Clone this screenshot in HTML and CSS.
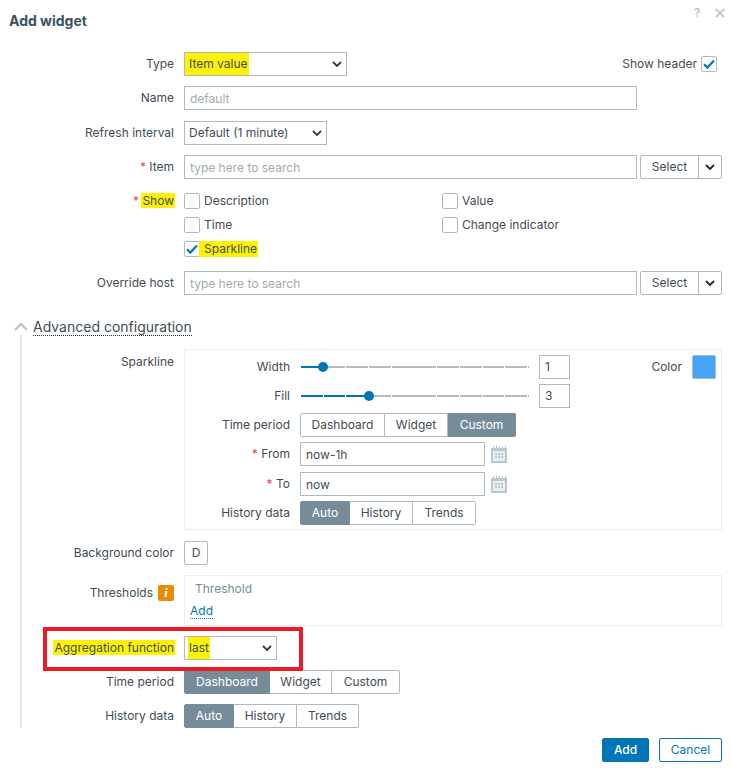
FILE: index.html
```html
<!DOCTYPE html>
<html lang="en">
<head>
<meta charset="utf-8">
<title>Add widget</title>
<link rel="stylesheet" href="styles.css">
</head>
<body>
<svg class="defs" width="0" height="0" aria-hidden="true">
  <symbol id="chev" viewBox="0 0 10 6"><path d="M1 1l4 4 4-4" fill="none" stroke="currentColor" stroke-width="1.9"/></symbol>
  <symbol id="tick" viewBox="0 0 12 10"><path d="M1 5.2l3.4 3.4L11 1.6" fill="none" stroke="#0275b8" stroke-width="2.2"/></symbol>
  <symbol id="cal" viewBox="0 0 18 18">
    <path d="M1 3h16v15H1z" fill="#b9c7ce"/>
    <path d="M3 6h12v10H3z" fill="#e9eef0"/>
    <path d="M3 1h1v2H3zM6 1h1v2H6zM9 1h1v2H9zM12 1h1v2h-1zM15 1h1v2h-1z" fill="#b9c7ce"/>
    <path d="M5 8h2v2H5zM8 8h2v2H8zM11 8h2v2h-2zM5 11h2v2H5zM8 11h2v2H8zM11 11h2v2h-2z" fill="#b9c7ce"/>
  </symbol>
</svg>
<div class="dialog">
  <header class="head">
    <h1 class="title">Add widget</h1>
    <span class="help">?</span>
    <svg class="close" width="10" height="10" viewBox="0 0 10 10"><path d="M.8.8l8.4 8.4M9.2.8L.8 9.2" stroke="#bcc8ce" stroke-width="1.8" fill="none"/></svg>
  </header>

  <div class="form">
    <div class="label">Type</div>
    <div class="field between">
      <div class="select w163"><span class="hl wide">Item value</span><svg class="chev"><use href="#chev"/></svg></div>
      <label class="showhdr">Show header <span class="check on"><svg width="12" height="10"><use href="#tick"/></svg></span></label>
    </div>

    <div class="label">Name</div>
    <div class="field"><div class="input w453 ph">default</div></div>

    <div class="label">Refresh interval</div>
    <div class="field"><div class="select w143"><span>Default (1 minute)</span><svg class="chev"><use href="#chev"/></svg></div></div>

    <div class="label"><span class="req">*</span> Item</div>
    <div class="field picker">
      <div class="input w453 ph">type here to search</div>
      <div class="split"><span class="split-main">Select</span><span class="split-arrow"><svg class="chev dark"><use href="#chev"/></svg></span></div>
    </div>

    <div class="label show-label"><span class="req">*</span> <span class="hl">Show</span></div>
    <div class="checks">
      <label class="opt"><span class="check"></span>Description</label>
      <label class="opt"><span class="check"></span>Value</label>
      <label class="opt"><span class="check"></span>Time</label>
      <label class="opt"><span class="check"></span>Change indicator</label>
      <label class="opt"><span class="check on"><svg width="12" height="10"><use href="#tick"/></svg></span><span class="hl wide">Sparkline</span></label>
    </div>

    <div class="label">Override host</div>
    <div class="field picker">
      <div class="input w453 ph">type here to search</div>
      <div class="split"><span class="split-main">Select</span><span class="split-arrow"><svg class="chev dark"><use href="#chev"/></svg></span></div>
    </div>
  </div>

  <div class="adv-head">
    <svg class="adv-chev" width="14" height="9" viewBox="0 0 14 9"><path d="M1 8l6-6 6 6" fill="none" stroke="#b6c4cb" stroke-width="2.4"/></svg>
    <span class="adv-title">Advanced configuration</span>
  </div>

  <div class="adv-body">
    <div class="form adv-form">
      <div class="label spark-label">Sparkline</div>
      <div class="panel spark">
        <div class="label">Width</div>
        <div class="field slider-row">
          <div class="slider"><div class="fill" style="width:22px"><i class="thumb"></i></div></div>
          <div class="input num">1</div>
          <div class="colorpick"><span>Color</span><span class="swatch"></span></div>
        </div>
        <div class="label">Fill</div>
        <div class="field slider-row">
          <div class="slider"><div class="fill" style="width:68px"><i class="thumb"></i></div></div>
          <div class="input num">3</div>
        </div>
        <div class="label">Time period</div>
        <div class="field"><div class="seg"><span class="s85">Dashboard</span><span class="s63">Widget</span><span class="s68 active">Custom</span></div></div>
        <div class="label"><span class="req">*</span> From</div>
        <div class="field date"><div class="input w185">now-1h</div><svg width="18" height="18"><use href="#cal"/></svg></div>
        <div class="label to-label"><span class="req">*</span> To</div>
        <div class="field date to-label"><div class="input w185">now</div><svg width="18" height="18"><use href="#cal"/></svg></div>
        <div class="label">History data</div>
        <div class="field"><div class="seg"><span class="s50 active">Auto</span><span class="s63">History</span><span class="s63">Trends</span></div></div>
      </div>

      <div class="label">Background color</div>
      <div class="field"><div class="dbox">D</div></div>

      <div class="label thr-label">Thresholds <span class="info">i</span></div>
      <div class="panel thresholds">
        <div class="thr-head">Threshold</div>
        <a class="add-link">Add</a>
      </div>

      <div class="label agg"><span class="hl">Aggregation function</span></div>
      <div class="field agg-field">
        <div class="select w93"><span class="hl">last</span><svg class="chev"><use href="#chev"/></svg></div>
        <div class="redbox"></div>
      </div>

      <div class="label">Time period</div>
      <div class="field"><div class="seg"><span class="s86 active">Dashboard</span><span class="s62">Widget</span><span class="s68">Custom</span></div></div>

      <div class="label">History data</div>
      <div class="field"><div class="seg"><span class="s50 active">Auto</span><span class="s63">History</span><span class="s62">Trends</span></div></div>
    </div>
  </div>

  <footer class="foot">
    <button class="btn primary">Add</button>
    <button class="btn ghost">Cancel</button>
  </footer>
</div>
</body>
</html>
```

FILE: styles.css
```css
* { box-sizing: border-box; }
html, body { margin: 0; height: 100%; background: #fff; }
body { font: 12px/16px Inter, "Liberation Sans", sans-serif; color: #3f4c55; overflow: hidden; }
.defs { position: absolute; }
.dialog { width: 731px; height: 768px; padding-right: 9px; }

.head { height: 52px; position: relative; padding: 13px 0 0 9px; }
.title { margin: 0; font-size: 14px; line-height: 16px; font-weight: 700; color: #3d5261; }
.help { position: absolute; left: 694px; top: 5px; font-size: 12px; color: #bcc8ce; font-weight: 600; }
.close { position: absolute; left: 715px; top: 8px; }

.form { display: grid; grid-template-columns: 174px 1fr; column-gap: 10px; row-gap: 10.33px; }
.label { text-align: right; line-height: 24px; height: 24px; white-space: nowrap; }
.req { color: #f0474f; }
.field { display: flex; align-items: center; min-height: 24px; }
.between { justify-content: space-between; padding-right: 5px; }

.input, .select { height: 24px; border: 1px solid #acbbc2; background: #fff; line-height: 22px; padding: 1px 5px 0; display: flex; align-items: center; white-space: nowrap; }
.picker .input, .date .input { padding-top: 2px; }
.select { padding: 0 4px; justify-content: space-between; }
.ph { color: #a3abaf; }
.w453 { width: 453px; }
.w163 { width: 163px; }
.w143 { width: 143px; }
.w185 { width: 185px; }
.w93 { width: 93px; }
.chev { width: 10px; height: 6px; color: #30404a; flex: none; }
.chev.dark { color: #1f2c33; }
.hl { background: #fff200; padding: 0 1px; margin: 0 -1px; }
.hl.wide { padding-left: 5px; margin-left: -5px; }
.select .hl.wide { padding-left: 4px; margin-left: -4px; }

.showhdr { display: flex; align-items: center; gap: 4px; }
.check { width: 16px; height: 16px; border: 1px solid #acbbc2; border-radius: 2px; display: inline-flex; align-items: center; justify-content: center; flex: none; background: #fff; }

.picker { gap: 3px; }
.split { display: flex; height: 24px; width: 82px; border: 1px solid #acbbc2; border-radius: 2px; line-height: 22px; }
.split-main { width: 58px; text-align: center; border-right: 1px solid #acbbc2; }
.split-arrow { flex: 1; display: flex; align-items: center; justify-content: center; }

.checks { display: grid; grid-template-columns: 258px 1fr; grid-auto-rows: 24px; align-items: center; margin-bottom: -1px; }
.opt { display: flex; align-items: center; gap: 4px; }

.adv-head { display: flex; align-items: center; margin-top: 23px; height: 18px; padding-left: 14px; gap: 5px; }
.adv-title { font-size: 14px; line-height: 18px; border-bottom: 1px dotted #1f2c33; height: 18px; }
.adv-body { margin: -1px 0 0 20px; border-left: 2px solid #dfe6e9; padding-top: 14px; height: 393px; }
.adv-form { grid-template-columns: 152px 1fr; }
.spark-label { margin-top: 1px; }

.panel { border: 1px solid #ebeef0; }
.spark { display: grid; grid-template-columns: 105px 1fr; column-gap: 10px; row-gap: 5px; padding: 5px 5px 5px 0; height: 181px; margin-bottom: 1px; align-content: start; }
.slider-row { gap: 10px; }
.slider { width: 228px; height: 2px; margin-left: 1px; position: relative; background: repeating-linear-gradient(90deg, #b8b8b8 0 21.7px, #fff 21.7px 22.7px); }
.fill { position: absolute; left: 0; top: 0; height: 2px; background: repeating-linear-gradient(90deg, #0275b8 0 21.7px, #fff 21.7px 22.7px); }
.thumb { position: absolute; right: -5px; top: -4px; width: 10px; height: 10px; border-radius: 50%; background: #0275b8; }
.num { width: 31px; }
.colorpick { display: flex; align-items: center; gap: 10px; margin-left: auto; }
.swatch { width: 24px; height: 24px; background: #42a5f5; border: 1px solid #acbbc2; border-radius: 2px; }

.seg { display: flex; height: 24px; border-radius: 2px; }
.seg span { display: block; text-align: center; line-height: 22px; border: 1px solid #acbbc2; border-left-width: 0; }
.seg span:first-child { border-left-width: 1px; border-radius: 2px 0 0 2px; }
.seg span:last-child { border-radius: 0 2px 2px 0; }
.seg .active { background: #768d99; border-color: #768d99; color: #fff; }
.s85 { width: 85px; } .s86 { width: 86px; } .s63 { width: 63px; } .s62 { width: 62px; } .s68 { width: 68px; } .s50 { width: 50px; }

.date { gap: 5px; }
.to-label { margin-top: 1px; }

.dbox { width: 24px; height: 24px; border: 1px solid #acbbc2; border-radius: 2px; text-align: center; line-height: 22px; }
.thr-label { line-height: 16px; height: 16px; margin-top: 10px; display: flex; justify-content: flex-end; align-items: center; gap: 5px; }
.info { width: 16px; height: 16px; background: #e98b00; border-radius: 2px; color: #fff; font: italic 700 13px/16px "Liberation Serif", serif; text-align: center; }
.thresholds { height: 51px; margin-bottom: -1px; padding: 5px 5px 0 5px; }
.thr-head { color: #768d99; padding-left: 5px; line-height: 16px; }
.add-link { display: inline-block; margin-top: 6px; color: #0275b8; border-bottom: 1px dotted #0275b8; line-height: 15px; }

.agg-field { position: relative; }
.redbox { position: absolute; left: -141px; top: -9px; width: 260px; height: 44px; border: 4px solid #ed1c24; pointer-events: none; }

.foot { display: flex; justify-content: flex-end; gap: 10px; margin-top: 10px; }
.btn { height: 24px; border-radius: 2px; font: 500 12px/22px Inter, sans-serif; padding: 0; }
.primary { width: 47px; background: #0275b8; border: 1px solid #0275b8; color: #fff; }
.ghost { width: 63px; background: #fff; border: 1px solid #0275b8; color: #0275b8; font-weight: 400; }
```
